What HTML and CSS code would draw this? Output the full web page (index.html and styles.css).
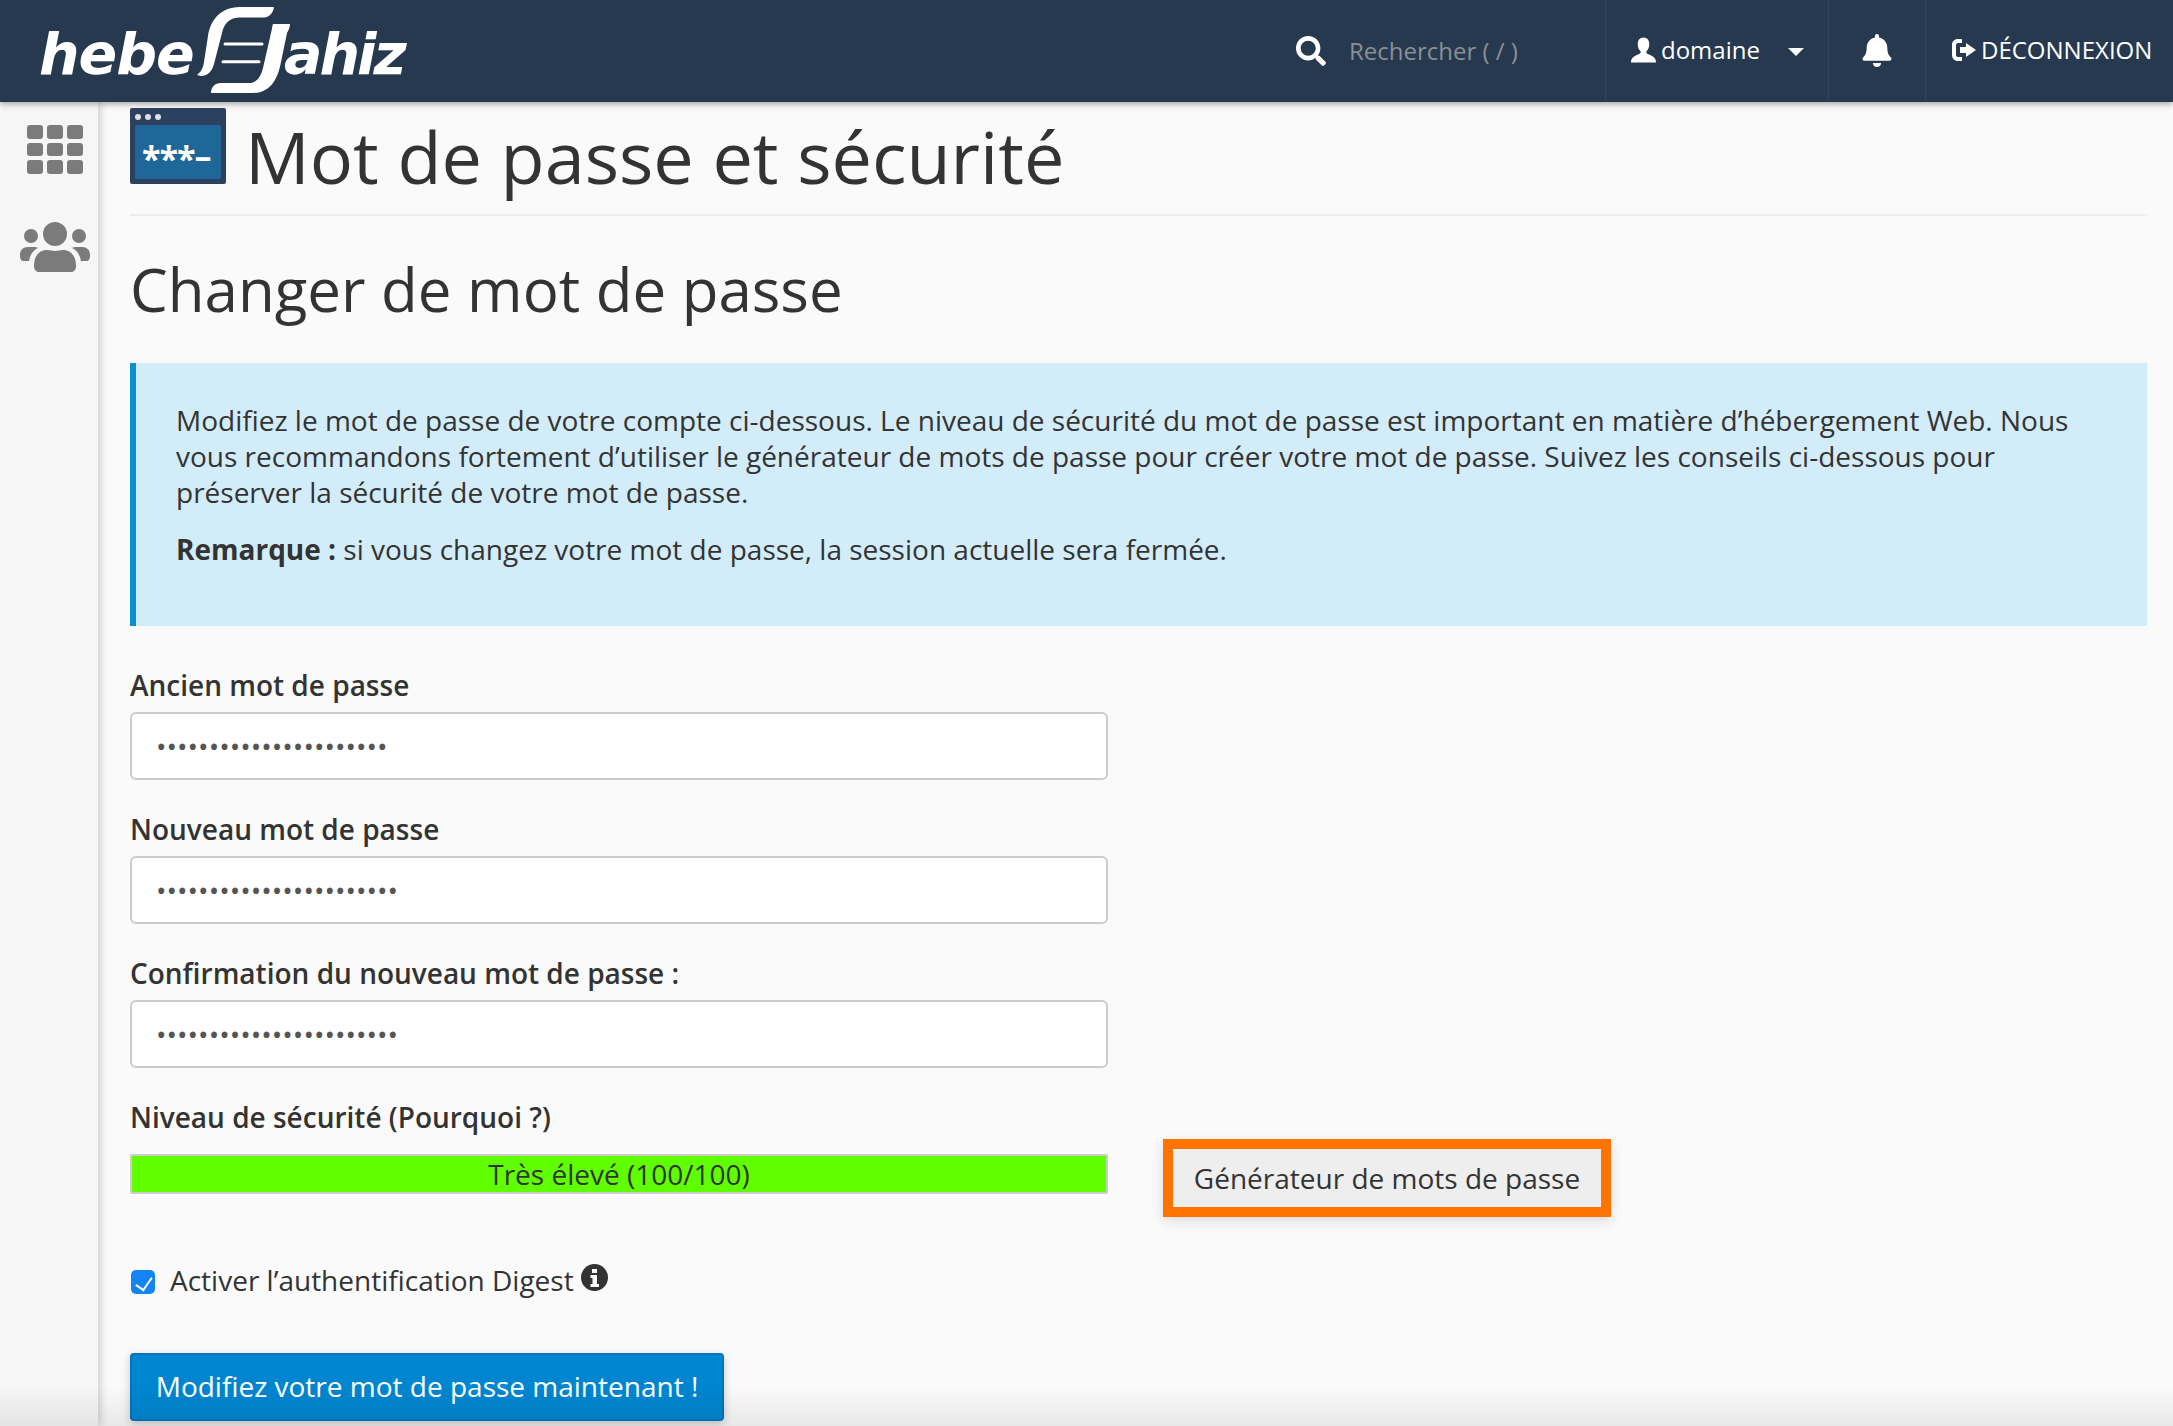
FILE: index.html
```html
<!DOCTYPE html>
<html lang="fr">
<head>
<meta charset="utf-8">
<title>Mot de passe et sécurité</title>
<link rel="stylesheet" href="styles.css">
</head>
<body>
<header class="topbar">
  <div class="logo">
    <span class="logo-word">hebe</span>
    <svg class="logo-mark" viewBox="0 0 93 88" width="93" height="88" aria-hidden="true">
      <path d="M0 69C4 66 6 62 7 56L11 30C13 16 22 1 43 1H77C76 7 73 11 67 11.500H42C32 12 27 18 25 27L17 58C15 66 10 70 4 70Z" fill="#fff"/>
      <path d="M76 18H93C93 22 91 25 90 27L84 56C81 72 74 87 56 87H14C14 81 18 77 24 77H52C60 77 64 70 66 62L74 27C75 23 75 21 76 18Z" fill="#fff"/>
      <path d="M28 38H65M26 55.700H62" stroke="#fff" stroke-width="3" stroke-linecap="round" fill="none"/>
    </svg>
    <span class="logo-word logo-word-end">ahiz</span>
  </div>
  <nav class="topnav">
    <div class="search">
      <svg class="ico-search" viewBox="0 0 512 512" aria-hidden="true"><path d="M505 442.7L405.3 343c-4.5-4.5-10.6-7-17-7H372c27.6-35.3 44-79.7 44-128C416 93.1 322.9 0 208 0S0 93.1 0 208s93.1 208 208 208c48.3 0 92.7-16.4 128-44v16.3c0 6.4 2.5 12.5 7 17l99.7 99.7c9.4 9.4 24.6 9.4 33.9 0l28.3-28.3c9.4-9.4 9.4-24.6.1-34zM208 336c-70.7 0-128-57.2-128-128 0-70.7 57.2-128 128-128 70.7 0 128 57.2 128 128 0 70.7-57.2 128-128 128z"/></svg>
      <span class="search-text">Rechercher ( / )</span>
    </div>
    <div class="nav-item nav-user">
      <svg class="ico-user" viewBox="0 0 26 26" aria-hidden="true"><path d="M13 0C8.800 0 7 3.200 7 7c0 3 1 5.500 2.800 7.200.4.400.5 1 .3 1.500-.3.800-1 1.300-2.100 1.800C4 19.200 0 20.500 0 26h26c0-5.500-4-6.800-8-8.500-1.100-.5-1.800-1-2.100-1.800-.2-.5-.1-1.100.3-1.500C18 12.500 19 10 19 7c0-3.800-1.800-7-6-7z"/></svg>
      <span>domaine</span>
      <i class="caret"></i>
    </div>
    <div class="nav-item nav-bell">
      <svg class="ico-bell" viewBox="0 0 448 512" aria-hidden="true"><path d="M224 512c35.32 0 63.97-28.65 63.97-64H160.03c0 35.35 28.65 64 63.97 64zm215.39-149.71c-19.32-20.76-55.47-51.99-55.47-154.29 0-77.7-54.48-139.9-127.94-155.16V32c0-17.67-14.32-32-31.98-32s-31.98 14.33-31.98 32v20.84C118.56 68.1 64.08 130.3 64.08 208c0 102.3-36.15 133.53-55.47 154.29-6 6.45-8.66 14.16-8.61 21.71.11 16.4 12.98 32 32.1 32h383.8c19.12 0 32-15.6 32.1-32 .05-7.55-2.61-15.27-8.61-21.71z"/></svg>
    </div>
    <div class="nav-item nav-logout">
      <svg class="ico-logout" viewBox="0 0 26 24" aria-hidden="true"><path d="M7 1h4v4H7C6 5 5 6 5 7v10c0 1 1 2 2 2h4v4H7c-3.500 0-6-2.500-6-6V7c0-3.500 2.500-6 6-6z"/><path d="M15 5l10 7-10 7v-4H9V9h6z"/></svg>
      <span>DÉCONNEXION</span>
    </div>
  </nav>
</header>
<div class="layout">
  <aside class="sidebar">
    <svg class="side-grid" viewBox="0 0 56 50" aria-hidden="true">
      <rect x="0" y="0" width="16" height="14" rx="3"/><rect x="20" y="0" width="16" height="14" rx="3"/><rect x="40" y="0" width="16" height="14" rx="3"/>
      <rect x="0" y="18" width="16" height="13" rx="3"/><rect x="20" y="18" width="16" height="13" rx="3"/><rect x="40" y="18" width="16" height="13" rx="3"/>
      <rect x="0" y="35" width="16" height="14" rx="3"/><rect x="20" y="35" width="16" height="14" rx="3"/><rect x="40" y="35" width="16" height="14" rx="3"/>
    </svg>
    <svg class="side-users" viewBox="0 0 70 50" aria-hidden="true">
      <circle cx="35" cy="12" r="12"/><circle cx="11" cy="14" r="7"/><circle cx="59" cy="14" r="7"/>
      <path d="M14 44c0-10 5-16 13-16 3 0 5 1 8 1s5-1 8-1c8 0 13 6 13 16 0 4-2 6-6 6H20c-4 0-6-2-6-6z"/>
      <path d="M0 33c0-5 3-8 8-8h6c1 0 3 0 4 1-5 2-8 7-9 13H4c-3 0-4-2-4-6z"/>
      <path d="M70 33c0-5-3-8-8-8h-6c-1 0-3 0-4 1 5 2 8 7 9 13h5c3 0 4-2 4-6z"/>
    </svg>
  </aside>
  <main class="content">
    <div class="page-head">
      <svg class="page-icon" viewBox="0 0 96 76" aria-hidden="true">
        <rect class="pi-frame" width="96" height="76" rx="2"/>
        <circle class="pi-dot" cx="8" cy="9" r="3"/><circle class="pi-dot" cx="18" cy="9" r="3"/><circle class="pi-dot" cx="28" cy="9" r="3"/>
        <rect class="pi-screen" x="5" y="17" width="86" height="54" rx="2"/>
        <text class="pi-text" x="12" y="63">***<tspan dy="-3">–</tspan></text>
      </svg>
      <h1 class="page-title">Mot de passe et sécurité</h1>
    </div>
    <h2 class="section-title">Changer de mot de passe</h2>
    <section class="notice">
      <p>Modifiez le mot de passe de votre compte ci-dessous. Le niveau de sécurité du mot de passe est important en matière d’hébergement Web. Nous vous recommandons fortement d’utiliser le générateur de mots de passe pour créer votre mot de passe. Suivez les conseils ci-dessous pour préserver la sécurité de votre mot de passe.</p>
      <p><strong>Remarque :</strong> si vous changez votre mot de passe, la session actuelle sera fermée.</p>
    </section>
    <form class="pw-form">
      <div class="field">
        <label class="field-label" for="old">Ancien mot de passe</label>
        <input class="field-input" id="old" type="password" value="abcdefghijklmnopqrstuv">
      </div>
      <div class="field">
        <label class="field-label" for="new">Nouveau mot de passe</label>
        <input class="field-input" id="new" type="password" value="abcdefghijklmnopqrstuvw">
      </div>
      <div class="field">
        <label class="field-label" for="confirm">Confirmation du nouveau mot de passe :</label>
        <input class="field-input" id="confirm" type="password" value="abcdefghijklmnopqrstuvw">
      </div>
      <div class="field-label strength-label">Niveau de sécurité (Pourquoi ?)</div>
      <div class="strength-row">
        <div class="strength-bar">Très élevé (100/100)</div>
        <button class="gen-btn" type="button">Générateur de mots de passe</button>
      </div>
      <div class="check-row">
        <input class="check" id="digest" type="checkbox" checked>
        <label for="digest">Activer l’authentification Digest</label>
        <svg class="ico-info" viewBox="0 0 27 27" aria-hidden="true"><circle cx="13.500" cy="13.500" r="13.500"/><path class="ii" d="M11 5h5v4h-5zM9.500 11h6.500v9h2v3H9.500v-3h2v-6h-2z"/></svg>
      </div>
      <button class="submit-btn" type="button">Modifiez votre mot de passe maintenant !</button>
    </form>
  </main>
</div>
<div class="bottom-fade"></div>
</body>
</html>
```
FILE: styles.css
```css
* { box-sizing: border-box; }
html, body { margin: 0; height: 100%; overflow: hidden; }
body {
  background: #fafafa;
  color: #333;
  font-family: "Open Sans", "Noto Sans", sans-serif;
  font-size: 28px;
  line-height: 36px;
}

/* top bar */
.topbar {
  height: 102px;
  background: #26394f;
  display: flex;
  align-items: stretch;
  justify-content: space-between;
  color: #fff;
  position: relative;
  z-index: 2;
  box-shadow: 0 2px 6px rgba(0,0,0,.35);
}
.logo { display: flex; align-items: flex-start; padding-left: 39px; width: 500px; }
.logo-word {
  font-family: "DejaVu Sans", sans-serif;
  font-weight: 700;
  font-style: italic;
  font-size: 57px;
  line-height: 60px;
  letter-spacing: -1px;
  margin-top: 24px;
  width: 158px;
  color: #fff;
}
.logo-word-end { margin-left: -6px; width: 124px; letter-spacing: -3px; }
.logo-mark { margin-top: 6px; flex: none; }
.topnav { display: flex; align-items: stretch; height: 100px; font-size: 24px; }
.search { display: flex; align-items: center; width: 309px; }
.ico-search { width: 30px; height: 30px; fill: #fff; margin-top: 1px; }
.search-text { color: #8b8f95; margin: 2px 0 0 23px; }
.nav-item {
  display: flex;
  align-items: center;
  border-left: 1px solid #31465c;
}
.nav-user { width: 223px; padding-left: 25px; }
.ico-user { width: 25px; height: 26px; fill: #fff; margin-right: 5px; }
.caret {
  width: 0; height: 0;
  margin-left: 28px;
  margin-top: 4px;
  border-left: 8px solid transparent;
  border-right: 8px solid transparent;
  border-top: 8px solid #fff;
}
.nav-bell { width: 97px; padding-left: 33px; }
.ico-bell { width: 30px; height: 33px; fill: #fff; }
.nav-logout { width: 248px; padding-left: 25px; }
.ico-logout { width: 26px; height: 24px; fill: #fff; margin-right: 4px; }

/* frame */
.layout { display: flex; height: calc(100vh - 102px); }
.sidebar {
  width: 98px;
  flex: none;
  background: #f6f6f6;
  box-shadow: 2px 0 8px rgba(0,0,0,.2);
  display: flex;
  flex-direction: column;
  align-items: center;
  padding: 23px 0 0 12px;
}
.side-grid { width: 56px; height: 50px; fill: #7b7b7b; }
.side-users { width: 70px; height: 50px; fill: #7b7b7b; margin-top: 47px; }
.content { flex: 1; padding: 6px 26px 0 32px; min-width: 0; }

/* headings */
.page-head {
  display: flex;
  align-items: flex-start;
  height: 108px;
  border-bottom: 2px solid #eee;
}
.page-icon { width: 96px; height: 76px; flex: none; }
.pi-frame { fill: #2c4060; }
.pi-dot { fill: #dcdfe4; }
.pi-screen { fill: #1f6699; }
.pi-text { fill: #fff; font-family: "Open Sans", sans-serif; font-weight: 700; font-size: 34px; letter-spacing: -1px; }
.page-title {
  margin: 3px 0 0 19px;
  font-size: 72px;
  line-height: 90px;
  font-weight: 400;
}
.section-title {
  margin: 34px 0 35px;
  font-size: 60px;
  line-height: 78px;
  font-weight: 400;
}

/* info box */
.notice {
  height: 263px;
  background: #d2edf9;
  border-left: 6px solid #0a8fd0;
  padding: 39px 40px 0;
}
.notice p { margin: 0 0 21px; }

/* form */
.pw-form { padding-top: 41px; }
.field { margin-bottom: 31px; }
.field-label { display: block; font-weight: 600; margin-bottom: 9px; }
.field-input {
  display: block;
  width: 978px;
  height: 68px;
  border: 2px solid #ccc;
  border-radius: 6px;
  background: #fff;
  color: #555;
  padding: 0 24px;
  font-family: "Open Sans", sans-serif;
  font-size: 28px;
}
.strength-label { margin-bottom: 4px; }
.strength-row { display: flex; align-items: flex-start; }
.strength-bar {
  width: 978px;
  height: 40px;
  margin-top: 15px;
  background: #5fff00;
  border: 2px solid #ccc;
  border-radius: 2px;
  text-align: center;
  line-height: 36px;
}
.gen-btn {
  width: 448px;
  height: 78px;
  margin-left: 55px;
  border: 10px solid #ff7300;
  background: #eee;
  color: #333;
  font-family: inherit;
  font-size: 28px;
  box-shadow: 0 4px 12px rgba(0,0,0,.12);
  padding: 0;
}
.check-row { display: flex; align-items: center; margin-top: 45px; height: 36px; padding-left: 1px; }
.check {
  appearance: none;
  position: relative;
  width: 24px;
  height: 24px;
  margin: 4px 15px 0 0;
  border-radius: 5px;
  background: #1484f5;
}
.check::after {
  content: "";
  position: absolute;
  left: 8px;
  top: 4px;
  width: 8px;
  height: 14px;
  border: solid #fff;
  border-width: 0 2px 2px 0;
  transform: rotate(35deg);
}
.ico-info { width: 27px; height: 27px; margin: -5px 0 0 7px; fill: #333; }
.ii { fill: #fafafa; }
.submit-btn {
  display: block;
  width: 594px;
  height: 68px;
  margin-top: 55px;
  border: 2px solid #0075ba;
  border-radius: 4px;
  background: #0086d0;
  color: #fff;
  font-family: inherit;
  font-size: 28px;
  padding: 0 0 2px;
  box-shadow: 0 3px 10px rgba(0,0,0,.2);
}

/* page-bottom fade over the cropped page */
.bottom-fade {
  position: fixed;
  left: 0; right: 0; bottom: 0;
  height: 40px;
  z-index: 3;
  pointer-events: none;
  background: linear-gradient(rgba(0,0,0,0), rgba(0,0,0,.07));
}
```
